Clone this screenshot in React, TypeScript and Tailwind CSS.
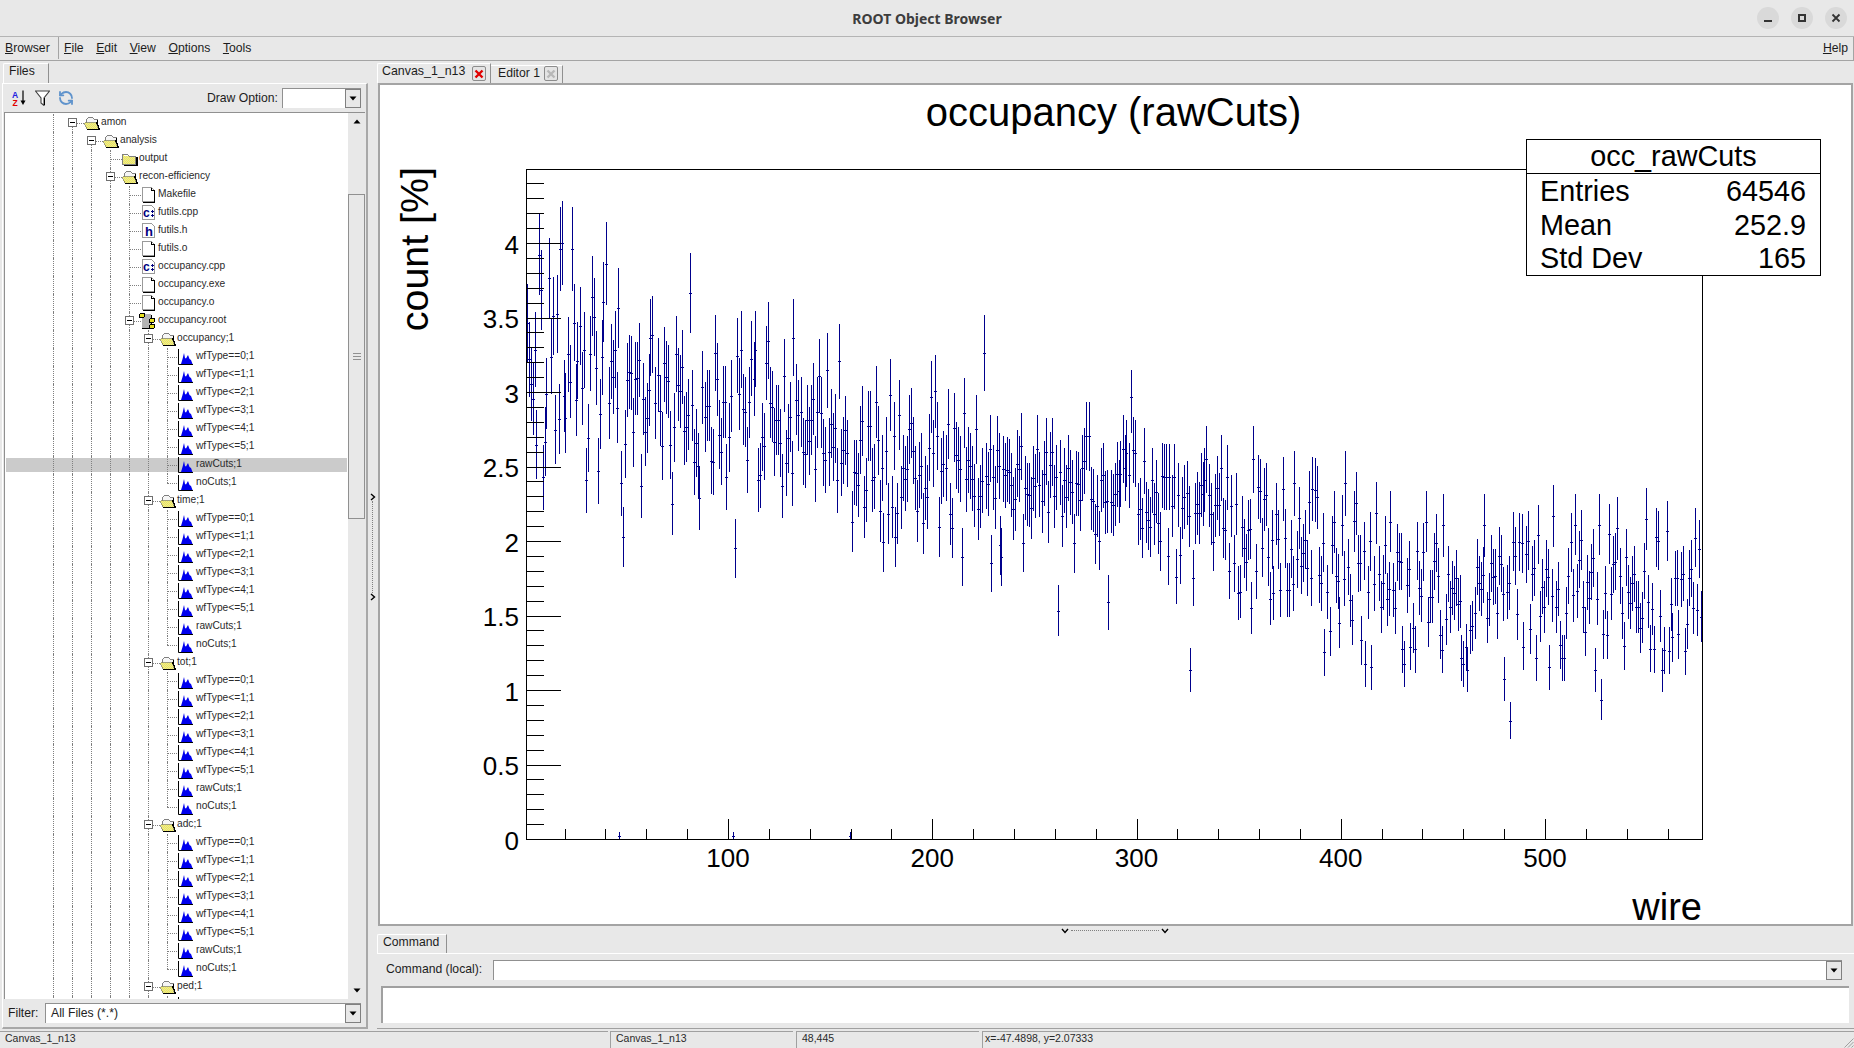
import { RefreshCcw } from "lucide-react";

// ---- plot data: wire occupancy bins, noise plus the spikes read off the picture ----

const MEAN: [number, number][] = [
  [0, 3.2], [56, 3.0], [147, 2.7], [200, 2.5], [277, 2.3], [300, 2.22], [350, 2.06],
  [400, 1.9], [430, 1.7], [460, 1.56], [480, 1.66], [520, 1.72], [577, 1.64],
];

// [x, centre, top, bottom] in crop coordinates
const SPIKES_LEFT = [
  [5, 400, 283, 517], [38, 195, 70, 315], [43, 300, 180, 420], [65, 265, 145, 385], [94, 178, 52, 302],
  [99, 160, 33, 285], [126, 178, 52, 303], [142, 283, 162, 405], [147, 408, 290, 525], [131, 400, 283, 513],
  [137, 513, 395, 627], [179, 320, 198, 438], [184, 382, 265, 498], [208, 337, 215, 455], [214, 222, 97, 345],
  [240, 480, 363, 593], [246, 355, 235, 473], [163, 870, 775, 968], [195, 844, 745, 941], [256, 880, 783, 977],
  [261, 1042, 951, 1130], [309, 888, 792, 983], [333, 445, 327, 557], [338, 436, 318, 548], [391, 942, 846, 1034],
  [438, 310, 190, 428], [463, 925, 828, 1020], [559, 1075, 987, 1163], [533, 862, 762, 960], [48, 862, 765, 960],
  [53, 757, 650, 857], [28, 766, 660, 866], [57, 612, 505, 718], [105, 685, 548, 788], [152, 595, 485, 705],
  [222, 640, 530, 747], [370, 520, 410, 635], [506, 490, 375, 603], [564, 498, 383, 608], [574, 480, 363, 594],
  [600, 508, 392, 617], [610, 480, 363, 590], [646, 453, 335, 567], [711, 445, 327, 558], [803, 540, 430, 655],
  [835, 513, 403, 627], [1080, 622, 513, 728], [1090, 603, 495, 713], [1220, 490, 375, 603], [870, 997, 903, 1085],
  [950, 1057, 968, 1145], [984, 1042, 950, 1130], [1162, 1102, 1015, 1187], [1237, 1120, 1035, 1205],
  [1262, 1066, 978, 1155], [1265, 1102, 1015, 1187], [1417, 1264, 1185, 1338], [1548, 1237, 1155, 1320],
];

const SPIKES_RIGHT = [
  [43, 52, -30, 158], [28, 220, 120, 320], [54, 220, 120, 320], [48, 210, 110, 310], [12, 283, 183, 380],
  [240, 238, 138, 338], [235, 300, 205, 395], [365, 238, 138, 338], [130, 292, 192, 390], [136, 292, 192, 390],
  [142, 292, 192, 390], [99, 300, 205, 400], [168, 345, 250, 440], [198, 870, 805, 935], [208, 595, 510, 678],
  [327, 640, 558, 720], [360, 685, 607, 762], [418, 640, 558, 720], [445, 328, 232, 423], [474, 310, 213, 408],
  [522, 328, 232, 423], [610, 310, 213, 408], [580, 427, 333, 520], [729, 427, 333, 517], [825, 427, 333, 517],
  [870, 435, 342, 530], [979, 435, 342, 530], [1162, 408, 315, 500], [1220, 436, 342, 525], [1282, 436, 342, 525],
  [1329, 445, 350, 540], [1407, 418, 325, 510], [553, 817, 747, 887], [570, 753, 682, 827], [593, 730, 652, 805],
  [652, 780, 708, 855], [662, 853, 783, 920], [679, 862, 795, 930], [761, 808, 738, 878], [767, 853, 783, 920],
  [783, 800, 728, 870], [918, 835, 765, 903], [923, 853, 783, 921], [933, 870, 805, 935], [1032, 898, 832, 962],
  [1048, 1024, 965, 1077], [1080, 800, 726, 870], [1115, 835, 765, 902], [1151, 862, 795, 930], [1184, 835, 765, 902],
  [1189, 835, 765, 902], [1271, 870, 805, 935], [1287, 961, 897, 1020], [1292, 763, 690, 837], [1449, 870, 805, 935],
  [1476, 772, 700, 845], [1492, 763, 690, 836],
];

const PX_PER_WIRE = 2.0425;
const X0 = 523.75;
const Y0 = 839;
const PX_PER_COUNT = 149;

function meanAt(x: number) {
  for (let i = 1; i < MEAN.length; i++) {
    if (x <= MEAN[i][0]) {
      const [x0, v0] = MEAN[i - 1];
      const [x1, v1] = MEAN[i];
      return v0 + ((v1 - v0) * (x - x0)) / (x1 - x0);
    }
  }
  return MEAN[MEAN.length - 1][1];
}

function buildBarsPath() {
  let seed = 20231;
  const rand = () => {
    seed = (seed + 0x6d2b79f5) | 0;
    let t = Math.imul(seed ^ (seed >>> 15), 1 | seed);
    t = (t + Math.imul(t ^ (t >>> 7), 61 | t)) ^ t;
    return ((t ^ (t >>> 14)) >>> 0) / 4294967296;
  };
  const bars = new Map<number, [number, number, number]>();
  for (let i = 1; i < 577; i++) {
    const px = Math.round(X0 + (i + 0.5) * PX_PER_WIRE);
    const g = Math.sqrt(-2 * Math.log(rand() + 1e-6)) * Math.cos(6.2832 * rand());
    const v = meanAt(i) + Math.max(-1.9, Math.min(1.9, g)) * 0.21;
    const err = 0.14 * Math.sqrt(v);
    const c = Y0 - v * PX_PER_COUNT;
    bars.set(px, [c, c - err * PX_PER_COUNT, c + err * PX_PER_COUNT]);
  }
  for (const [zx, zc, zt, zb] of SPIKES_LEFT) {
    const px = Math.round(525 + zx / 2.657);
    bars.set(px, [190 + zc / 3, 190 + zt / 3, 190 + zb / 3]);
    bars.delete(px + 1);
  }
  for (const [zx, zc, zt, zb] of SPIKES_RIGHT) {
    const px = Math.round(1115 + zx / 2.65);
    bars.set(px, [380 + zc / 3, 380 + zt / 3, 380 + zb / 3]);
    bars.delete(px + 1);
  }
  for (const px of [619, 733, 850]) bars.set(px, [836, 832, 839]);
  let d = "";
  bars.forEach(([c, t, b], px) => {
    if (px < 526 || px > 1701) return;
    const cy = Math.round(c) + 0.5;
    d += `M${px + 0.5} ${Math.round(t)}V${Math.round(b)}M${Math.max(px - 1, 526)} ${cy}h3`;
  });
  return d;
}

const BARS_PATH = buildBarsPath();

function axisTicksPath() {
  let d = "";
  for (let i = 1; i <= 45; i++) {
    const y = Math.round(Y0 - (i / 10) * PX_PER_COUNT) + 0.5;
    d += `M526 ${y}h${i % 5 === 0 ? 35 : 18}`;
  }
  for (let w = 20; w <= 560; w += 20) {
    const x = Math.round(X0 + w * PX_PER_WIRE) + 0.5;
    d += `M${x} 839v${w % 100 === 0 ? -20 : -10}`;
  }
  return d;
}

const TICKS_PATH = axisTicksPath();

const Y_LABELS = ["0", "0.5", "1", "1.5", "2", "2.5", "3", "3.5", "4"];
const X_LABELS = [100, 200, 300, 400, 500];

function Plot() {
  return (
    <svg width={1471} height={839} viewBox="380 85 1471 839" className="block">
      <text x={1113.5} y={126} textAnchor="middle" fontSize={40} fill="#000">
        occupancy (rawCuts)
      </text>
      <path d={BARS_PATH} stroke="#00008c" strokeWidth={1} fill="none" shapeRendering="crispEdges" />
      <rect x={526.5} y={169.5} width={1176} height={670} fill="none" stroke="#000" strokeWidth={1} shapeRendering="crispEdges" />
      <path d={TICKS_PATH} stroke="#000" strokeWidth={1} fill="none" shapeRendering="crispEdges" />
      {Y_LABELS.map((label, i) => (
        <text key={label} x={519} y={Y0 - i * 74.5 + 10.5} textAnchor="end" fontSize={26} fill="#000">
          {label}
        </text>
      ))}
      {X_LABELS.map((w) => (
        <text key={w} x={X0 + w * PX_PER_WIRE} y={867} textAnchor="middle" fontSize={26} fill="#000">
          {w}
        </text>
      ))}
      <text x={1702} y={920} textAnchor="end" fontSize={38} fill="#000">
        wire
      </text>
      <text transform="translate(428 167) rotate(-90)" textAnchor="end" fontSize={39.4} fill="#000">
        count [%]
      </text>
    </svg>
  );
}

function StatsBox() {
  const rows = [
    ["Entries", "64546"],
    ["Mean", "252.9"],
    ["Std Dev", "165"],
  ];
  return (
    <div className="absolute left-[1146px] top-[54px] h-[137px] w-[295px] border border-black bg-white text-[28.8px] leading-[33.5px] text-black">
      <div className="mb-[1px] h-[34px] border-b border-black text-center leading-[32px]">occ_rawCuts</div>
      {rows.map(([name, value]) => (
        <div key={name} className="flex justify-between pl-[13px] pr-[14px]">
          <span>{name}</span>
          <span>{value}</span>
        </div>
      ))}
    </div>
  );
}

// ---- small icons ----

function FolderOpen() {
  return (
    <svg width={16} height={13} viewBox="0 0 16 13" shapeRendering="crispEdges">
      <path d="M2.5 2.5l2-2h4l2 2h3v8h-11z" fill="#f6f6f6" stroke="#808080" />
      <path d="M0.5 5.5h12l2 6.5h-11z" fill="url(#dither)" stroke="#8a8a60" strokeWidth={0.8} />
      <path d="M13.5 3v3M12.5 5l3 7.5M3 12.5h12.5" stroke="#000" fill="none" strokeWidth={1.2} />
    </svg>
  );
}

function FolderClosed() {
  return (
    <svg width={16} height={13} viewBox="0 0 16 13" shapeRendering="crispEdges">
      <path d="M0.5 1.5h5l2 2h6v8h-13z" fill="url(#dither)" stroke="#808080" />
      <path d="M1.5 2.5h4" stroke="#fff" />
      <path d="M14.75 3.5v8.75H2" stroke="#000" strokeWidth={1.5} fill="none" />
    </svg>
  );
}

function FileIcon({ label }: { label?: string }) {
  return (
    <svg width={14} height={16} viewBox="0 0 14 16" shapeRendering="crispEdges" className="ml-[1px]">
      <path d="M0.5 0.5h9l3 3v11h-12z" fill="#fff" stroke="#9a9a9a" />
      {!label && <path d="M12.5 3v12.5H1M9.5 0.5v3h3" stroke="#000" fill="none" />}
      {label === "h" && (
        <text x={3} y={13} fontSize={13} fontWeight={700} fill="#000080">
          h
        </text>
      )}
      {label === "c" && (
        <>
          <text x={1} y={12} fontSize={12} fontWeight={700} fill="#000080">
            c
          </text>
          <path d="M9 6h3M10.5 4.5v3M9 10h3M10.5 8.5v3" stroke="#000080" />
        </>
      )}
    </svg>
  );
}

function RootFileIcon() {
  return (
    <svg width={17} height={16} viewBox="0 0 17 16" shapeRendering="crispEdges" className="-ml-[2px]">
      <rect x={3} y={1} width={9} height={14} fill="#b4b4b4" />
      <path d="M12.5 2v13.5H3" stroke="#000" fill="none" />
      <rect x={0.5} y={0.5} width={5} height={4} rx={1.5} fill="#e8e020" stroke="#000" />
      <rect x={10.5} y={5.5} width={5} height={4} rx={1.5} fill="#e8e020" stroke="#000" />
      <rect x={10.5} y={11.5} width={5} height={4} rx={1.5} fill="#e8e020" stroke="#000" />
    </svg>
  );
}

function HistIcon() {
  return (
    <svg width={15} height={16} viewBox="0 0 15 16" className="-ml-[1px]">
      <path d="M3 15L4.5 10L6 4L7 9L8 9.5L10 6L11.5 10L13 11L14.5 15z" fill="#0000ee" />
      <path d="M0.5 0v15.5H15" stroke="#000" fill="none" />
    </svg>
  );
}

function ComboButton() {
  return (
    <span className="flex h-full w-[16px] shrink-0 flex-col items-center justify-center border border-[#808080] bg-[#e8e8e8]">
      <svg width={8} height={5} viewBox="0 0 8 5">
        <path d="M0.5 0.5h7L4 4.5z" fill="#000" />
      </svg>
    </span>
  );
}

function TabClose({ active }: { active?: boolean }) {
  const color = active ? "#e00000" : "#b8b8b8";
  return (
    <span className="flex h-[15px] w-[14px] shrink-0 items-center justify-center rounded-[2px] border border-[#8c8c8c] bg-[#e4e4e4]">
      <svg width={10} height={10} viewBox="0 0 10 10">
        <path d="M1.5 1.5L8.5 8.5M8.5 1.5L1.5 8.5" stroke={color} strokeWidth={2.4} />
      </svg>
    </span>
  );
}

// ---- tree ----

type Kind = "open" | "closed" | "file" | "cpp" | "h" | "root" | "hist";

interface TreeItem {
  name: string;
  level: number;
  kind: Kind;
  expanded?: boolean;
  first?: boolean;
  last?: boolean;
  selected?: boolean;
}

function histGroup(name: string, selected?: boolean): TreeItem[] {
  const names = ["wfType==0;1", "wfType<=1;1", "wfType<=2;1", "wfType<=3;1", "wfType<=4;1", "wfType<=5;1", "rawCuts;1", "noCuts;1"];
  return [
    { name, level: 4, kind: "open", expanded: true },
    ...names.map((n, i) => ({
      name: n,
      level: 5,
      kind: "hist" as Kind,
      last: i === 7,
      selected: selected && n === "rawCuts;1",
    })),
  ];
}

const TREE: TreeItem[] = [
  { name: "amon", level: 0, kind: "open", expanded: true, first: true },
  { name: "analysis", level: 1, kind: "open", expanded: true, first: true },
  { name: "output", level: 2, kind: "closed" },
  { name: "recon-efficiency", level: 2, kind: "open", expanded: true },
  { name: "Makefile", level: 3, kind: "file" },
  { name: "futils.cpp", level: 3, kind: "cpp" },
  { name: "futils.h", level: 3, kind: "h" },
  { name: "futils.o", level: 3, kind: "file" },
  { name: "occupancy.cpp", level: 3, kind: "cpp" },
  { name: "occupancy.exe", level: 3, kind: "file" },
  { name: "occupancy.o", level: 3, kind: "file" },
  { name: "occupancy.root", level: 3, kind: "root", expanded: true },
  ...histGroup("occupancy;1", true),
  ...histGroup("time;1"),
  ...histGroup("tot;1"),
  ...histGroup("adc;1"),
  { name: "ped;1", level: 4, kind: "open", expanded: true },
  { name: "", level: 5, kind: "hist" },
];

function TreeIcon({ kind }: { kind: Kind }) {
  if (kind === "open") return <FolderOpen />;
  if (kind === "closed") return <FolderClosed />;
  if (kind === "root") return <RootFileIcon />;
  if (kind === "hist") return <HistIcon />;
  if (kind === "cpp") return <FileIcon label="c" />;
  if (kind === "h") return <FileIcon label="h" />;
  return <FileIcon />;
}

function TreeRow({ item }: { item: TreeItem }) {
  return (
    <div className="relative flex h-[18px] shrink-0 pl-[48px]">
      {item.selected && <div className="absolute inset-x-[1px] inset-y-[2px] bg-[#cbcbcb]" />}
      {Array.from({ length: item.level + 1 }).map((_, i) => (
        <span key={i} className="relative h-full w-[19px] shrink-0 border-l border-dotted border-[#808080]" />
      ))}
      <span className="relative h-full w-[12px] shrink-0">
        <span
          className={`absolute left-0 border-l border-dotted border-[#808080] ${
            item.first ? "top-1/2 bottom-0" : item.last ? "top-0 bottom-1/2" : "inset-y-0"
          }`}
        />
        <span className="absolute left-0 right-0 top-1/2 border-t border-dotted border-[#808080]" />
        {item.expanded && (
          <span className="absolute -left-[4px] top-[4px] flex h-[9px] w-[9px] items-center justify-center border border-[#707070] bg-white">
            <span className="h-[1px] w-[5px] bg-black" />
          </span>
        )}
      </span>
      <span className="relative flex h-full w-[17px] shrink-0 items-center">
        <TreeIcon kind={item.kind} />
      </span>
      <span className="relative flex h-full items-center whitespace-nowrap pb-[3px] text-[10.2px] leading-[13px] text-[#2a2a2a]">
        {item.name}
      </span>
    </div>
  );
}

function ScrollBar() {
  return (
    <div className="flex w-[17px] shrink-0 flex-col items-center bg-[#e8e8e8]">
      <div className="flex h-[81px] w-full shrink-0 justify-center pt-[6px]">
        <svg width={8} height={5} viewBox="0 0 8 5">
          <path d="M0.5 4.5h7L4 0.5z" fill="#000" />
        </svg>
      </div>
      <div className="flex h-[325px] w-full shrink-0 flex-col items-center justify-center gap-[2px] border border-[#909090]">
        <span className="h-[1px] w-[8px] bg-[#909090]" />
        <span className="h-[1px] w-[8px] bg-[#909090]" />
        <span className="h-[1px] w-[8px] bg-[#909090]" />
      </div>
      <div className="flex w-full flex-1 items-end justify-center pb-[6px]">
        <svg width={8} height={5} viewBox="0 0 8 5">
          <path d="M0.5 0.5h7L4 4.5z" fill="#000" />
        </svg>
      </div>
    </div>
  );
}

function Mnemonic({ text }: { text: string }) {
  return (
    <span>
      <span className="underline">{text[0]}</span>
      {text.slice(1)}
    </span>
  );
}

function Chevron({ rotate }: { rotate?: boolean }) {
  return (
    <svg width={6} height={8} viewBox="0 0 6 8" className={rotate ? "rotate-90" : ""}>
      <path d="M1 1l3.5 3L1 7" stroke="#000" strokeWidth={1.4} fill="none" />
    </svg>
  );
}

function LeftPanel() {
  return (
    <div className="flex w-[368px] shrink-0 flex-col pb-[2px] pl-[2px]">
      <div className="flex h-[22px] shrink-0 items-end pl-[1px]">
        <div className="h-[20px] w-[46px] rounded-tl-[2px] border-l border-r border-t border-l-white border-r-[#909090] border-t-white pl-[5px] leading-[15px]">
          Files
        </div>
      </div>
      <div className="flex min-h-0 flex-1 flex-col border-b-2 border-l border-r-2 border-t border-b-[#a8a8a8] border-l-white border-r-[#a8a8a8] border-t-white">
        <div className="flex h-[28px] shrink-0 items-center pl-[9px] pr-[5px]">
          <svg width={15} height={16} viewBox="0 0 15 16">
            <text x={0} y={7.5} fontSize={8.5} fontWeight={700} fill="#2020e0">A</text>
            <text x={0.5} y={15.5} fontSize={8.5} fontWeight={700} fill="#e00000">Z</text>
            <path d="M11 0.5v11" stroke="#000" strokeWidth={1.2} />
            <path d="M8.5 10.5h5L11 15z" fill="#000" />
          </svg>
          <svg width={15} height={16} viewBox="0 0 15 16" className="ml-[8px]">
            <path d="M0.5 1h14L9 8v7.5L6 13V8z" fill="#fff" stroke="#404040" strokeWidth={1.1} />
            <path d="M9.5 8v7" stroke="#000" />
          </svg>
          <RefreshCcw size={16} strokeWidth={2.7} color="#5f93cc" className="ml-[8px]" />
          <span className="ml-auto mr-[4px]">Draw Option:</span>
          <div className="flex h-[20px] w-[79px] justify-end border-l border-t border-[#909090] bg-white">
            <ComboButton />
          </div>
        </div>
        <div className="mx-[1px] flex h-[887px] shrink-0 border-l border-t border-[#909090]">
          <div className="flex min-w-0 flex-1 flex-col overflow-hidden bg-white pt-[1px]">
            {TREE.map((item, i) => (
              <TreeRow key={i} item={item} />
            ))}
          </div>
          <ScrollBar />
        </div>
        <div className="flex flex-1 items-center px-[5px]">
          <span className="w-[37px] shrink-0">Filter:</span>
          <div className="flex h-[20px] flex-1 items-center justify-between border-l border-t border-[#909090] bg-white pl-[5px]">
            <span className="text-[#222]">All Files (*.*)</span>
            <ComboButton />
          </div>
        </div>
      </div>
    </div>
  );
}

function RightPanel() {
  return (
    <div className="flex min-w-0 flex-1 flex-col">
      <div className="flex h-[22px] shrink-0 items-end">
        <div className="flex h-[20px] w-[114px] items-start rounded-tl-[2px] border-l border-r border-t border-l-white border-r-[#909090] border-t-white pl-[4px]">
          <span className="text-[12.4px] leading-[15px]">Canvas_1_n13</span>
          <span className="ml-auto mr-[4px] mt-[2px]"><TabClose active /></span>
        </div>
        <div className="flex h-[18px] w-[72px] items-start border-r border-t border-r-[#909090] border-t-white pl-[7px]">
          <span className="leading-[15px]">Editor 1</span>
          <span className="ml-auto mr-[4px]"><TabClose /></span>
        </div>
      </div>
      <div className="relative mx-[1px] h-[843px] shrink-0 border-2 border-[#a4a4a4] bg-white">
        <Plot />
        <StatsBox />
      </div>
      <div className="flex h-[8px] shrink-0 items-start justify-center gap-[3px] pr-[2px] pt-[1px]">
        <Chevron rotate />
        <span className="mt-[3px] w-[88px] border-t border-dotted border-[#808080]" />
        <Chevron rotate />
      </div>
      <div className="flex h-[19px] shrink-0 items-end">
        <div className="h-[19px] w-[70px] rounded-tl-[2px] border-l border-r border-t border-l-white border-r-[#909090] border-t-white pl-[5px] leading-[15px]">
          Command
        </div>
      </div>
      <div className="flex h-[76px] shrink-0 flex-col border-b border-t border-b-[#a0a0a0] border-t-white pl-[4px] pr-[5px]">
        <div className="mt-[5px] flex h-[21px] shrink-0 items-center pr-[7px]">
          <span className="w-[112px] shrink-0 pb-[1px] pl-[5px]">Command (local):</span>
          <div className="flex h-[20px] flex-1 justify-end border-l border-t border-[#909090] bg-white">
            <ComboButton />
          </div>
        </div>
        <div className="mt-[6px] h-[37px] shrink-0 border-l-2 border-t-2 border-l-[#a0a0a0] border-t-[#a0a0a0] bg-white" />
      </div>
    </div>
  );
}

function StatusBar() {
  return (
    <div className="flex h-[17px] shrink-0 text-[10.5px] leading-[13px] text-[#2a2a2a]">
      <div className="w-[608px] shrink-0 border-t border-[#a0a0a0] pl-[5px]">Canvas_1_n13</div>
      <div className="ml-[2px] w-[183px] shrink-0 border-l border-t border-[#a0a0a0] pl-[5px]">Canvas_1_n13</div>
      <div className="ml-[3px] w-[183px] shrink-0 border-l border-t border-[#a0a0a0] pl-[5px]">48,445</div>
      <div className="relative ml-[3px] flex-1 border-l border-t border-[#a0a0a0] pl-[2px]">
        x=-47.4898, y=2.07333
        <svg width={12} height={12} viewBox="0 0 12 12" className="absolute bottom-0 right-0">
          <path d="M11.5 2.5L2.5 11.5M11.5 6L6 11.5M11.5 9.5L9.5 11.5" stroke="#a0a0a0" fill="none" />
        </svg>
      </div>
    </div>
  );
}

export default function App() {
  return (
    <div className="flex h-[1048px] w-[1854px] flex-col overflow-hidden bg-[#e8e8e8] font-['Liberation_Sans',Arial,sans-serif] text-[12.2px] text-[#1c1c1c]">
      <svg className="absolute h-0 w-0">
        <defs>
          <pattern id="dither" width={2} height={2} patternUnits="userSpaceOnUse">
            <rect width={2} height={2} fill="#f4ec50" />
            <rect width={1} height={1} fill="#e4e4a0" />
            <rect x={1} y={1} width={1} height={1} fill="#e4e4a0" />
          </pattern>
        </defs>
      </svg>

      {/* window title */}
      <div className="relative flex h-[37px] shrink-0 items-center justify-center border-b border-[#b4b4b4]">
        <span className="font-['Noto_Sans',sans-serif] text-[14px] font-bold text-[#3d3d3d]">ROOT Object Browser</span>
        <div className="absolute right-[7px] top-[7px] flex gap-[12px]">
          <span className="flex h-[22px] w-[22px] items-center justify-center rounded-full bg-[#d9d9d9]">
            <span className="mt-[6px] h-[2px] w-[8px] bg-[#333]" />
          </span>
          <span className="flex h-[22px] w-[22px] items-center justify-center rounded-full bg-[#d9d9d9]">
            <span className="h-[8px] w-[8px] border-2 border-[#333]" />
          </span>
          <span className="flex h-[22px] w-[22px] items-center justify-center rounded-full bg-[#d9d9d9]">
            <svg width={10} height={10} viewBox="0 0 10 10">
              <path d="M1.5 1.5L8.5 8.5M8.5 1.5L1.5 8.5" stroke="#333" strokeWidth={1.8} />
            </svg>
          </span>
        </div>
      </div>

      {/* menu bar */}
      <div className="flex h-[24px] shrink-0 items-center border-b border-r border-[#a4a4a4] pb-[1px]">
        <div className="flex h-full w-[59px] shrink-0 items-center border-r border-[#a4a4a4] pl-[5px]">
          <Mnemonic text="Browser" />
        </div>
        <div className="flex gap-[12.5px] pl-[5px]">
          {["File", "Edit", "View", "Options", "Tools"].map((m) => (
            <Mnemonic key={m} text={m} />
          ))}
        </div>
        <div className="ml-auto pr-[5px]">
          <Mnemonic text="Help" />
        </div>
      </div>

      <div className="flex min-h-0 flex-1">
        <LeftPanel />
        <div className="flex w-[9px] shrink-0 flex-col items-center pt-[432px]">
          <Chevron />
          <span className="h-[92px] border-l border-dotted border-[#808080]" />
          <Chevron />
        </div>
        <RightPanel />
      </div>

      <StatusBar />
    </div>
  );
}
